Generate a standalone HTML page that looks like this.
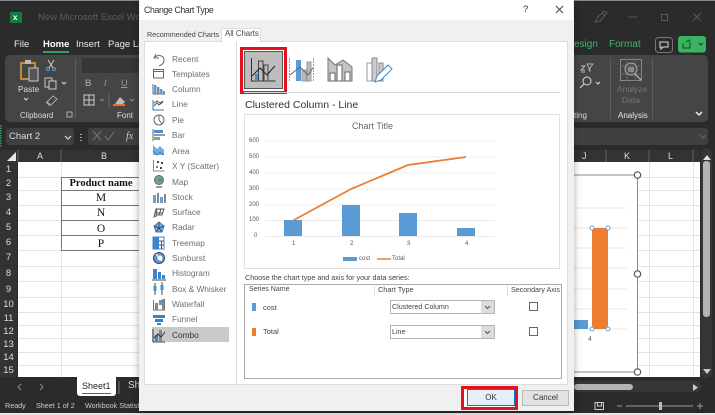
<!DOCTYPE html>
<html><head><meta charset="utf-8">
<style>
html,body{margin:0;padding:0;background:#2b2b2b}
#p{position:relative;width:715px;height:415px;overflow:hidden;background:#2b2b2b;font-family:"Liberation Sans",sans-serif;filter:blur(.35px)}
#p div{position:absolute}
.t{position:absolute;white-space:nowrap;line-height:12px}
.l{font-size:8.3px;color:#6e6e6e;left:172px}
.rh{left:0;width:17px;text-align:center;color:#ddd;font-size:9.5px;background:#333}
.tb{font-family:"Liberation Serif",serif;font-size:11.5px;color:#111;text-align:center;left:62px;width:78px;line-height:14px}
.n{position:absolute;font-size:6px;color:#555;line-height:6px}
svg{position:absolute;overflow:visible}
</style></head><body><div id="p">
<!-- top bar -->
<div style="left:0;top:0;width:715px;height:1px;background:#888"></div>
<div style="left:10px;top:12px;width:12px;height:11px;background:#107c41"></div>
<span class="t" style="left:13px;top:12px;font-size:8px;color:#fff;font-weight:bold">x</span>
<span class="t" style="left:38px;top:12px;font-size:9.5px;color:#5c5c5c">New Microsoft Excel Worksh</span>
<span class="t" style="left:14px;top:39px;font-size:9.5px;color:#e8e8e8">File</span>
<span class="t" style="left:43px;top:39px;font-size:9.5px;color:#fff;font-weight:bold">Home</span>
<div style="left:43px;top:51px;width:26px;height:2px;background:#2f9e63"></div>
<span class="t" style="left:76px;top:39px;font-size:9.5px;color:#e8e8e8">Insert</span>
<span class="t" style="left:108px;top:39px;font-size:9.5px;color:#e8e8e8">Page La</span>
<span class="t" style="left:574px;top:39px;font-size:10px;color:#3fb56f">esign</span>
<span class="t" style="left:609px;top:39px;font-size:10px;color:#3fb56f">Format</span>
<!-- window controls -->
<svg style="left:0;top:0" width="715" height="60">
<path d="M595 22l2-4 7-7 3 2-7 8zM602 13l3 3" fill="none" stroke="#5a5a5a"/>
<path d="M628 17h9" stroke="#555"/>
<rect x="661.500" y="14.500" width="6" height="6" fill="none" stroke="#5a5a5a"/>
<path d="M693 13l8 8M701 13l-8 8" stroke="#5a5a5a"/>
<rect x="655.500" y="37.500" width="17" height="15" rx="3" fill="none" stroke="#777"/>
<path d="M660 42h8v5h-5l-2 2v-2h-1z" fill="none" stroke="#ddd"/>
<rect x="678" y="36" width="28" height="16.500" rx="3" fill="#3cb361"/>
<path d="M683 43v5h7v-5M686 42l3-2 1 3" fill="none" stroke="#143"/>
<path d="M699 43l2 2 2-2" fill="none" stroke="#143"/>
</svg>
<!-- ribbon -->
<div style="left:5px;top:55px;width:703px;height:67px;background:#454545;border-radius:5px"></div>
<div style="left:82px;top:58px;width:60px;height:15px;background:#363636"></div>
<div style="left:75px;top:58px;width:1px;height:61px;background:#5c5c5c"></div>
<div style="left:610px;top:58px;width:1px;height:61px;background:#5c5c5c"></div>
<div style="left:652px;top:58px;width:1px;height:61px;background:#5c5c5c"></div>
<svg style="left:0;top:0" width="715" height="125">
<path d="M21 63h14v16H21z" fill="none" stroke="#e7a339" stroke-width="1.500"/>
<rect x="25" y="60" width="6" height="4" fill="#bbb"/>
<rect x="29" y="68" width="9" height="13" fill="#555" stroke="#ccc"/>
<path d="M48 60l5 8M54 60l-5 8" stroke="#ccc"/><circle cx="48" cy="69" r="1.500" fill="none" stroke="#5aa0e0"/><circle cx="54" cy="69" r="1.500" fill="none" stroke="#5aa0e0"/>
<rect x="45" y="78" width="7" height="9" fill="none" stroke="#ccc"/><rect x="49" y="81" width="7" height="8" fill="#454545" stroke="#ccc"/>
<path d="M62 82l2 2 2-2M24 98l2 2 2-2" fill="none" stroke="#ddd"/>
<path d="M47 102l6-6 4 3-6 6zM46 102l4 4" fill="none" stroke="#aaa"/>
<rect x="84" y="95" width="10" height="10" fill="none" stroke="#ccc"/><path d="M89 95v10M84 100h10" stroke="#ccc"/>
<path d="M115 104l5-7 5 5-3 3z" fill="#bbb"/><rect x="113" y="104" width="12" height="2" fill="#e8702a"/>
<path d="M130 99l2 2 2-2M100 99l2 2 2-2" fill="none" stroke="#888"/>
<path d="M109 94v14" stroke="#666"/>
<rect x="67" y="112" width="5" height="5" fill="none" stroke="#aaa"/>
<path d="M581 66h4l-4 4h4M581 72h4" stroke="#bbb" fill="none"/><path d="M587 64h6l-3 4v3l-1-1v-2z" fill="none" stroke="#aaa"/>
<circle cx="587" cy="81" r="4" fill="none" stroke="#ddd"/><path d="M584 84l-4 4" stroke="#ddd"/><path d="M596 82l2 2 2-2" fill="none" stroke="#ddd"/>
<rect x="620.500" y="59.500" width="21" height="21" fill="none" stroke="#888"/>
<path d="M620 66h22M620 74h22M627 59v22M635 59v22" stroke="#666"/>
<circle cx="631" cy="69" r="6" fill="#555" stroke="#aaa"/><rect x="628" y="67" width="6" height="5" fill="#888"/>
<path d="M635 74l6 6" stroke="#aaa" stroke-width="1.500"/>
<path d="M696 112l3 3 3-3" fill="none" stroke="#eee" stroke-width="1.500"/>
</svg>
<span class="t" style="left:18px;top:83px;font-size:8.300px;color:#ddd">Paste</span>
<span class="t" style="left:20px;top:110px;font-size:7.800px;color:#ddd">Clipboard</span>
<span class="t" style="left:117px;top:110px;font-size:8px;color:#ddd">Font</span>
<span class="t" style="left:85px;top:77px;font-size:9px;color:#999;font-weight:bold">B</span>
<span class="t" style="left:104px;top:77px;font-size:9px;color:#999;font-style:italic">I</span>
<span class="t" style="left:121px;top:77px;font-size:9px;color:#999;text-decoration:underline">U</span>
<span class="t" style="left:617px;top:83px;font-size:8.500px;color:#777;width:28px;text-align:center">Analyze</span>
<span class="t" style="left:617px;top:94px;font-size:8.500px;color:#777;width:28px;text-align:center">Data</span>
<span class="t" style="left:618px;top:110px;font-size:8px;color:#e8e8e8">Analysis</span>
<span class="t" style="left:574px;top:110px;font-size:8px;color:#ddd">ting</span>
<!-- formula bar -->
<div style="left:6px;top:128px;width:68px;height:17px;background:#404040;border-radius:3px"></div>
<span class="t" style="left:9px;top:131px;font-size:9.500px;color:#ddd">Chart 2</span>
<svg style="left:0;top:125px" width="715" height="25">
<path d="M65 11l3 3 3-3" fill="none" stroke="#ddd" stroke-width="1.200"/>
<path d="M81 9v1M81 12v1M81 15v1" stroke="#ccc" stroke-width="1.500"/>
<path d="M0 0v22" stroke="#2f9e63" stroke-width="3" stroke-dasharray="1.500 1"/>
</svg>
<div style="left:88px;top:128px;width:620px;height:17px;background:#404040;border-radius:3px"></div>
<span class="t" style="left:126px;top:131px;font-size:10px;color:#ccc;font-style:italic;font-family:'Liberation Serif',serif">fx</span>
<svg style="left:88px;top:128px" width="620" height="17"><path d="M5 3l8 9M13 3l-8 9M17 8l3 4 6-8" fill="none" stroke="#777"/><path d="M612 7l3 3 3-3" fill="none" stroke="#666"/></svg>
<!-- col headers -->
<div style="left:0;top:150px;width:700px;height:12px;background:#333"></div>
<svg style="left:0;top:150px" width="18" height="12"><path d="M16 2v9H7z" fill="#e8e8e8"/></svg>
<span class="t" style="left:37px;top:150px;font-size:9px;color:#ddd">A</span>
<span class="t" style="left:101px;top:150px;font-size:9px;color:#ddd">B</span>
<span class="t" style="left:582px;top:150px;font-size:9px;color:#ddd">J</span>
<span class="t" style="left:624px;top:150px;font-size:9px;color:#ddd">K</span>
<span class="t" style="left:668px;top:150px;font-size:9px;color:#ddd">L</span>
<!-- sheet -->
<div style="left:18px;top:162px;width:682px;height:215px;background:#fff"></div>
<svg style="left:0;top:150px" width="715" height="230">
<g stroke="#666"><path d="M18 0v12M61 0v12M606 0v12M649 0v12M693 0v12"/></g>
<g stroke="#e3e3e3">
<path d="M61.500 12v215M649.500 12v215M693.500 12v215"/>
<path d="M18 27.500h682M18 40.500h682M18 55.500h682M18 70.500h682M18 85.500h682M18 100.500h682M18 116.500h682M18 131.500h682M18 147.500h682M18 162.500h682M18 175.500h682M18 188.500h682M18 202.500h682M18 215.500h682"/>
</g>
<g stroke="#777" fill="none"><path d="M61.500 27v73.500H140M61.500 27.500H140M61.500 40.500H140M61.500 55.500H140M61.500 70.500H140M61.500 85.500H140"/></g>
</svg>
<!-- row headers -->
<div class="t rh" style="top:162px;height:15px;line-height:15px">1</div>
<div class="t rh" style="top:177px;height:14px;line-height:14px">2</div>
<div class="t rh" style="top:191px;height:14px;line-height:14px">3</div>
<div class="t rh" style="top:205px;height:15px;line-height:15px">4</div>
<div class="t rh" style="top:220px;height:15px;line-height:15px">5</div>
<div class="t rh" style="top:235px;height:15px;line-height:15px">6</div>
<div class="t rh" style="top:250px;height:15px;line-height:15px">7</div>
<div class="t rh" style="top:266px;height:16px;line-height:16px">8</div>
<div class="t rh" style="top:282px;height:15px;line-height:15px">9</div>
<div class="t rh" style="top:297px;height:16px;line-height:16px">10</div>
<div class="t rh" style="top:312px;height:13px;line-height:13px">11</div>
<div class="t rh" style="top:325px;height:13px;line-height:13px">12</div>
<div class="t rh" style="top:338px;height:13px;line-height:13px">13</div>
<div class="t rh" style="top:351px;height:13px;line-height:13px">14</div>
<div class="t rh" style="top:364px;height:13px;line-height:13px">15</div>
<!-- table text -->
<div class="tb" style="top:177px;font-weight:bold;font-size:10.500px">Product name</div>
<div class="tb" style="top:191px">M</div>
<div class="tb" style="top:206px">N</div>
<div class="tb" style="top:222px">O</div>
<div class="tb" style="top:237px">P</div>
<!-- embedded chart right -->
<div style="left:574px;top:175px;width:64px;height:197px;background:#fff"></div>
<svg style="left:0;top:0" width="715" height="415">
<g stroke="#e8e8e8"><path d="M574 208h53M574 228h53M574 248h53M574 268h53M574 289h53M574 309h53M574 329h53"/></g>
<path d="M574 175h63.500v197H574" fill="none" stroke="#8a8a8a" stroke-width="1"/>
<rect x="574" y="320" width="14" height="9" fill="#5b9bd5"/>
<rect x="592" y="228" width="16" height="101" fill="#ed7d31"/>
<g fill="#fff" stroke="#5aa9e6"><circle cx="592" cy="228" r="2"/><circle cx="608" cy="228" r="2"/><circle cx="592" cy="329" r="2"/><circle cx="608" cy="329" r="2"/></g>
<g fill="#fff" stroke="#555" stroke-width="1.200"><circle cx="637.500" cy="175" r="3.200"/><circle cx="637.500" cy="274" r="3.200"/><circle cx="637.500" cy="372" r="3.200"/></g>
</svg>
<span class="t" style="left:588px;top:334px;font-size:7px;color:#666">4</span>
<!-- scrollbars -->
<div style="left:701px;top:148px;width:11px;height:230px;background:#363636;border-radius:5px"></div>
<div style="left:703px;top:161px;width:7px;height:156px;background:#b5b5b5;border-radius:3px"></div>
<svg style="left:700px;top:150px" width="15" height="12"><path d="M3 10l4-5 4 5z" fill="#ddd"/></svg>
<svg style="left:700px;top:365px" width="15" height="12"><path d="M3 4h8l-4 5z" fill="#ccc"/></svg>
<div style="left:560px;top:381px;width:141px;height:11px;background:#363636;border-radius:5px"></div>
<div style="left:574px;top:384px;width:59px;height:6px;background:#b5b5b5;border-radius:3px"></div>
<svg style="left:693px;top:381px" width="10" height="12"><path d="M0 3l5 3.500-5 3.500z" fill="#ccc"/></svg>
<!-- sheet tabs -->
<div style="left:77px;top:377px;width:39px;height:19px;background:#fff;border-radius:0 0 3px 3px"></div>
<span class="t" style="left:82px;top:380px;font-size:9px;color:#222">Sheet1</span>
<div style="left:82px;top:393px;width:29px;height:1px;background:#1f8a50"></div>
<span class="t" style="left:128px;top:380px;font-size:10px;color:#ddd">Sh</span>
<svg style="left:0;top:376px" width="130" height="20"><path d="M21 8l-3 3 3 3M40 8l3 3-3 3" fill="none" stroke="#888"/><path d="M119 5v13" stroke="#777"/></svg>
<!-- status -->
<span class="t" style="left:5px;top:400px;font-size:7.200px;color:#ccc">Ready</span>
<span class="t" style="left:36px;top:400px;font-size:7.200px;color:#ccc">Sheet 1 of 2</span>
<span class="t" style="left:85px;top:400px;font-size:7.200px;color:#ccc">Workbook Statist</span>
<svg style="left:0;top:396px" width="715" height="19">
<rect x="595" y="6.500" width="8.500" height="7" fill="none" stroke="#ccc"/><path d="M597.500 6.500v3.500h4v-3.500" fill="none" stroke="#ccc"/>
<path d="M617 10h5M626 10h67M697 10h6M700 7v6" stroke="#999"/>
<rect x="659" y="6" width="3" height="8" fill="#bbb"/>
<rect x="0" y="17" width="715" height="2" fill="#e8e8e8"/>
</svg>
<!-- dialog -->
<div style="left:139px;top:0;width:435px;height:411px;background:#f0f0f0;box-shadow:0 0 7px rgba(0,0,0,.35)"></div>
<div style="left:140px;top:0;width:433px;height:20px;background:#fff"></div>
<span class="t" style="left:144px;top:4px;font-size:8.800px;letter-spacing:-.4px;color:#333">Change Chart Type</span>
<span class="t" style="left:523px;top:4px;font-size:9.500px;color:#333">?</span>
<svg style="left:555px;top:5px" width="10" height="10"><path d="M1 1l7 7M8 1L1 8" stroke="#444"/></svg>
<div style="left:144px;top:41px;width:424px;height:344px;background:#fff;border:1px solid #dcdcdc;box-sizing:border-box"></div>
<span class="t" style="left:147px;top:29px;font-size:7.200px;color:#444">Recommended Charts</span>
<div style="left:221px;top:28px;width:40px;height:14px;background:#fff;border:1px solid #dcdcdc;border-bottom:0;box-sizing:border-box"></div>
<span class="t" style="left:225px;top:28px;font-size:7.800px;color:#444">All Charts</span>
<div style="left:236px;top:42px;width:1px;height:342px;background:#dcdcdc"></div>
<!-- list -->
<div style="left:152px;top:327px;width:77px;height:15px;background:#c9c9c9"></div>
<span class="t l" style="top:53px">Recent</span>
<span class="t l" style="top:68px">Templates</span>
<span class="t l" style="top:83px">Column</span>
<span class="t l" style="top:98px">Line</span>
<span class="t l" style="top:114px">Pie</span>
<span class="t l" style="top:129px">Bar</span>
<span class="t l" style="top:145px">Area</span>
<span class="t l" style="top:160px">X Y (Scatter)</span>
<span class="t l" style="top:176px">Map</span>
<span class="t l" style="top:191px">Stock</span>
<span class="t l" style="top:206px">Surface</span>
<span class="t l" style="top:221px">Radar</span>
<span class="t l" style="top:237px">Treemap</span>
<span class="t l" style="top:252px">Sunburst</span>
<span class="t l" style="top:267px">Histogram</span>
<span class="t l" style="top:283px">Box &amp; Whisker</span>
<span class="t l" style="top:298px">Waterfall</span>
<span class="t l" style="top:313px">Funnel</span>
<span class="t l" style="top:329px;color:#333">Combo</span>
<!-- list icons -->
<svg style="left:0;top:0" width="240" height="345">
<g fill="none" stroke="#666">
<path d="M156 54l-2 4 5 0M155 57c4-3 9-1 9 3s-3 5-5 6"/>
<rect x="153.500" y="69.500" width="10" height="8.500"/><path d="M153.500 71.500h10" />
<path d="M153 94V84M153 94h12"/>
<path d="M153 100v10h11" stroke="#2e75b6"/><path d="M154 106l3-3 2 2 4-3M154 103l3-2 3 2 3-2" stroke="#555"/>
<circle cx="159" cy="120" r="5"/><path d="M159 115v5l3 4" />
</g>
<g fill="#5b9bd5"><rect x="154" y="85" width="2.500" height="9"/><rect x="160" y="89" width="2.500" height="5"/></g>
<rect x="157" y="87" width="2.500" height="7" fill="#888"/><rect x="163" y="91" width="2" height="3" fill="#888"/>
<path d="M153 129v12" stroke="#666"/><rect x="154" y="130" width="9" height="3" fill="#4a8fd0"/><rect x="154" y="134" width="11" height="2" fill="#999"/><rect x="154" y="137" width="6" height="3" fill="#999"/>
<path d="M153 155v-10l4 4 3-3 4 4v5z" fill="#6fb0e6"/><path d="M153 151l4 4 3-3 4 3" fill="none" stroke="#3a7fc0"/>
<path d="M153.500 160v11h11" fill="none" stroke="#888"/><g fill="#444"><rect x="157" y="161" width="2" height="2"/><rect x="161" y="162" width="2" height="2"/><rect x="160" y="167" width="2" height="2"/></g><rect x="156" y="166" width="2" height="2" fill="#4a8fd0"/>
<circle cx="159" cy="180" r="4.500" fill="#8a9a8a" stroke="#666"/><circle cx="160" cy="180" r="2" fill="#3aa76d"/><path d="M156 187h6" stroke="#777" stroke-width="1.500"/>
<g fill="#6a9fd0"><rect x="153" y="195" width="3" height="8"/><rect x="160" y="197" width="3" height="6"/></g><g fill="#888"><rect x="157" y="193" width="2" height="10"/><rect x="164" y="194" width="2" height="9"/></g>
<path d="M154 217l2-8h8l-2 6h-5zM157 209l-1 8M161 209l-2 6M155 213h8" fill="none" stroke="#555"/><path d="M154 217l3-2" stroke="#4a8fd0"/>
<path d="M159 222l5 4-2 6h-6l-2-6z" fill="#6fb0e6" stroke="#3a7fc0"/><path d="M159 222v6l3 4M154 226l5 2 5-2M159 228l-3 4" fill="none" stroke="#445"/>
<rect x="153" y="237" width="11" height="12" fill="#fff" stroke="#3a86cc"/><rect x="153" y="237" width="6" height="12" fill="#3a86cc"/><path d="M159 241h5M159 245h5M161.500 241v8" stroke="#555"/>
<circle cx="159" cy="258" r="5.500" fill="#5b9bd5" stroke="#445"/><circle cx="160" cy="258" r="2.500" fill="#fff"/><path d="M156 254l6 7" stroke="#fff"/>
<g fill="#3a86cc"><rect x="153" y="269" width="4" height="10"/><rect x="158" y="272" width="3" height="7"/><rect x="162" y="275" width="3" height="4"/></g><path d="M152 280h14" stroke="#444"/>
<path d="M155 283v12M162 282v13" stroke="#444"/><rect x="153.500" y="286" width="3" height="5" fill="#4a8fd0"/><rect x="160.500" y="285" width="3" height="5" fill="#4a8fd0"/>
<path d="M153.500 300v10h11v-11" fill="none" stroke="#777"/><rect x="155" y="303" width="3" height="7" fill="#888"/><rect x="159" y="300" width="3" height="5" fill="#5b9bd5"/><rect x="162" y="299" width="2" height="11" fill="#888"/>
<rect x="153" y="315" width="12" height="3" fill="#2e85d0"/><rect x="155" y="319" width="8" height="3" fill="#2e85d0"/><rect x="157" y="323" width="4" height="2" fill="#2e85d0"/>
<path d="M153 342v-13M153 342h12" stroke="#444" fill="none"/><rect x="155" y="335" width="3" height="6" fill="#3a86cc"/><rect x="159" y="330" width="3" height="11" fill="#888"/><path d="M154 338l4-4 3 3 4-5" fill="none" stroke="#333"/>
</svg>
<!-- chart type icons -->
<div style="left:240px;top:47px;width:47px;height:47px;background:#e6111e"></div>
<div style="left:243px;top:50px;width:41px;height:41px;background:#fff"></div>
<div style="left:244px;top:51px;width:39px;height:38px;background:#bdbdbd;border:1px solid #555;box-sizing:border-box"></div>
<svg style="left:240px;top:47px" width="160" height="50">
<g fill="none">
<path d="M11.500 11v23h24" stroke="#333"/>
<rect x="15" y="27" width="4" height="7" fill="#4a8fd0"/><rect x="18.500" y="14" width="4.500" height="20" stroke="#444"/><rect x="24" y="18" width="4" height="16" stroke="#444"/>
<path d="M12 29l8-8 7 7 6-7 2-2" stroke="#222"/>
<path d="M49.500 11v23M73.500 11v23" stroke="#999" stroke-dasharray="2 1"/>
<rect x="56" y="13" width="5" height="21" fill="#5b9bd5"/><rect x="62" y="23" width="4" height="11" fill="#bbb" stroke="#999"/><rect x="67" y="15" width="4" height="19" fill="#bbb" stroke="#999"/>
<path d="M50 28l10-8 8 8 5-7" stroke="#666"/>
<path d="M88 11l7 7 8-5 9 7v14H88z" fill="#c4c4c4" stroke="#777"/>
<rect x="90" y="26" width="5" height="8" fill="#fff" stroke="#666"/><rect x="97" y="18" width="5" height="16" fill="#fff" stroke="#666"/><rect x="105" y="25" width="5" height="9" fill="#fff" stroke="#666"/>
<rect x="127" y="16" width="5" height="18" stroke="#999"/><rect x="132" y="11" width="5" height="23" fill="#ccc" stroke="#888"/><rect x="139" y="16" width="4" height="18" fill="#ccc" stroke="#888"/>
<path d="M135 35l2-6 11-11 4 4-11 11z" fill="#fff" stroke="#3a86cc"/>
</g>
</svg>
<div style="left:244px;top:92px;width:316px;height:1px;background:#d8d8d8"></div>
<span class="t" style="left:245px;top:99px;font-size:10.500px;color:#333;line-height:13px">Clustered Column - Line</span>
<!-- chart preview -->
<div style="left:244px;top:114px;width:316px;height:155px;border:1px solid #e0e0e0;box-sizing:border-box"></div>
<span class="t" style="left:352px;top:120px;font-size:9px;color:#666">Chart Title</span>
<svg style="left:0;top:0" width="570" height="270">
<g stroke="#ececec"><path d="M265 141h230M265 157h230M265 173h230M265 189h230M265 205h230M265 220.500h230M265 236.500h230"/></g>
<g fill="#5b9bd5"><rect x="284" y="220" width="18" height="16"/><rect x="342" y="205" width="18" height="31"/><rect x="399" y="213" width="18" height="23"/><rect x="457" y="228" width="18" height="8"/></g>
<path d="M293 220.500L351 189L408 165L466 157" fill="none" stroke="#ed7d31" stroke-width="1.800"/>
<rect x="343" y="257" width="14" height="4" fill="#5b9bd5"/>
<path d="M377 259h14" stroke="#ed7d31" stroke-width="1.500"/>
</svg>
<span class="n" style="left:249px;top:138px">600</span>
<span class="n" style="left:249px;top:154px">500</span>
<span class="n" style="left:249px;top:170px">400</span>
<span class="n" style="left:249px;top:186px">300</span>
<span class="n" style="left:249px;top:202px">200</span>
<span class="n" style="left:249px;top:217px">100</span>
<span class="n" style="left:254px;top:233px">0</span>
<span class="n" style="left:292px;top:241px">1</span>
<span class="n" style="left:350px;top:241px">2</span>
<span class="n" style="left:407px;top:241px">3</span>
<span class="n" style="left:465px;top:241px">4</span>
<span class="n" style="left:359px;top:256px">cost</span>
<span class="n" style="left:392px;top:256px">Total</span>
<!-- series -->
<span class="t" style="left:245px;top:272px;font-size:7.200px;color:#444">Choose the chart type and axis for your data series:</span>
<div style="left:244px;top:284px;width:318px;height:95px;background:#fff;border:1px solid #aaa;box-sizing:border-box"></div>
<span class="t" style="left:249px;top:284px;font-size:7px;color:#444">Series Name</span>
<span class="t" style="left:378px;top:284px;font-size:7.300px;color:#444">Chart Type</span>
<span class="t" style="left:511px;top:284px;font-size:7.100px;color:#444">Secondary Axis</span>
<div style="left:374px;top:286px;width:1px;height:10px;background:#ddd"></div>
<div style="left:507px;top:286px;width:1px;height:10px;background:#ddd"></div>
<div style="left:252px;top:303px;width:4px;height:8px;background:#5b9bd5"></div>
<div style="left:252px;top:328px;width:4px;height:8px;background:#ed7d31"></div>
<span class="t" style="left:263px;top:302px;font-size:7.500px;color:#444">cost</span>
<span class="t" style="left:263px;top:326px;font-size:7.500px;color:#444">Total</span>
<div style="left:390px;top:300px;width:105px;height:14px;background:#fff;border:1px solid #b5b5b5;box-sizing:border-box"></div>
<div style="left:481px;top:301px;width:13px;height:12px;background:#dcdcdc"></div>
<span class="t" style="left:392px;top:301px;font-size:7.100px;color:#444">Clustered Column</span>
<div style="left:390px;top:325px;width:105px;height:14px;background:#fff;border:1px solid #b5b5b5;box-sizing:border-box"></div>
<div style="left:481px;top:326px;width:13px;height:12px;background:#dcdcdc"></div>
<span class="t" style="left:392px;top:326px;font-size:7.100px;color:#444">Line</span>
<svg style="left:0;top:0" width="570" height="345"><path d="M485 306l2.500 2.500 2.500-2.500M485 331l2.500 2.500 2.500-2.500" fill="none" stroke="#555"/></svg>
<div style="left:529px;top:302px;width:9px;height:9px;background:#fff;border:1px solid #666;box-sizing:border-box"></div>
<div style="left:529px;top:327px;width:9px;height:9px;background:#fff;border:1px solid #666;box-sizing:border-box"></div>
<!-- buttons -->
<div style="left:461px;top:386px;width:57px;height:24px;background:#e6111e"></div>
<div style="left:464px;top:389px;width:51px;height:18px;background:#fff"></div>
<div style="left:467px;top:389px;width:48px;height:17px;background:#e4f0fa;border:1px solid #0a78d4;box-sizing:border-box"></div>
<span class="t" style="left:467px;top:392px;width:48px;text-align:center;font-size:8px;color:#333">OK</span>
<div style="left:522px;top:390px;width:47px;height:16px;background:#e2e2e2;border:1px solid #bbb;box-sizing:border-box"></div>
<span class="t" style="left:522px;top:392px;width:47px;text-align:center;font-size:8px;color:#333">Cancel</span>
</div></body></html>
